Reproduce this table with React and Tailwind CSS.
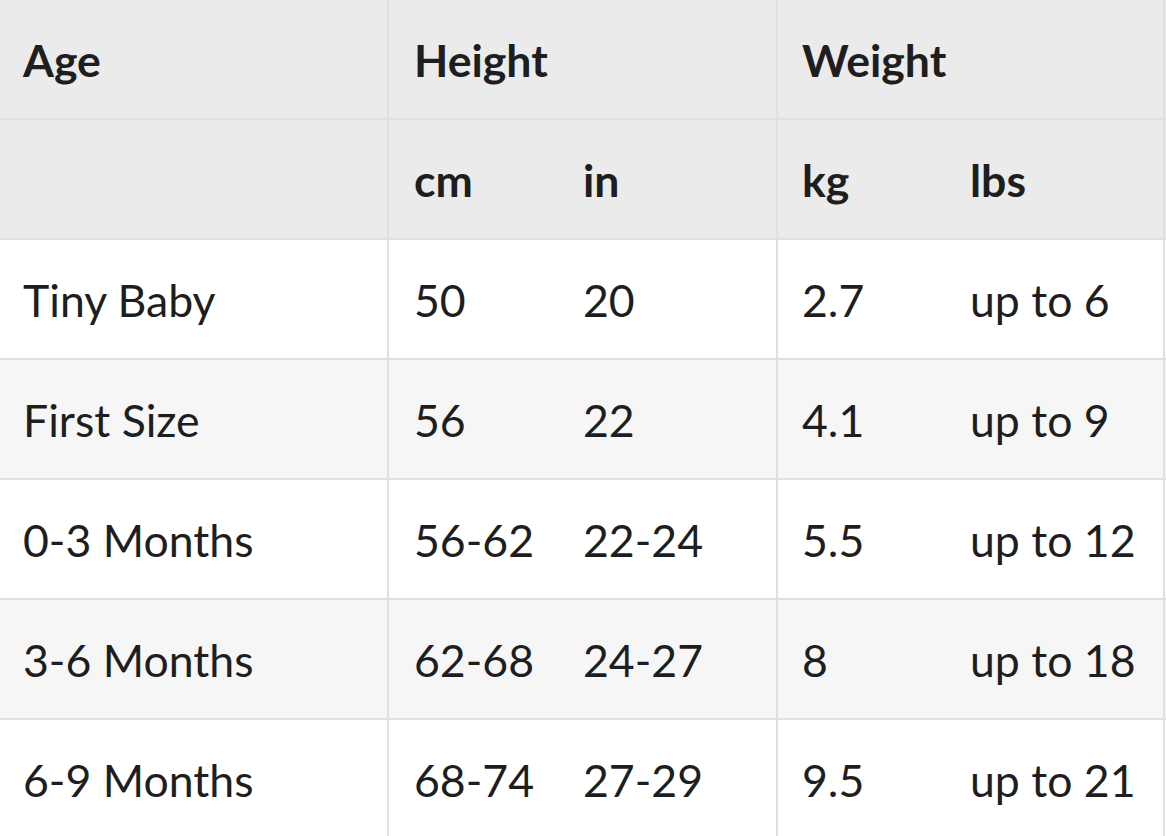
export default function App() {
  const rows = [
    ["Tiny Baby", "50", "20", "2.7", "up to 6"],
    ["First Size", "56", "22", "4.1", "up to 9"],
    ["0-3 Months", "56-62", "22-24", "5.5", "up to 12"],
    ["3-6 Months", "62-68", "24-27", "8", "up to 18"],
    ["6-9 Months", "68-74", "27-29", "9.5", "up to 21"],
  ];
  const cell = "flex items-center pl-[23px] pt-[3px]";
  const sub = "flex items-center pt-[3px]";
  return (
    <div className="w-[1166px] h-[836px] overflow-hidden bg-white text-[#1e1e1e] text-[44.6px]" style={{ fontFamily: "Lato, 'Open Sans', sans-serif" }}>
      <div className="flex h-[120px] bg-[#ebebeb] border-b-2 border-[#e0e0e0] font-bold">
        <div className={`${cell} w-[389px] border-r-2 border-[#e0e0e0]`}>Age</div>
        <div className={`${cell} w-[389px] pl-[25px] border-r-2 border-[#e0e0e0]`}>Height</div>
        <div className={`${cell} w-[387px] pl-[24px] border-r-2 border-[#e0e0e0]`}>Weight</div>
      </div>
      <div className="flex h-[120px] bg-[#ebebeb] border-b-2 border-[#e0e0e0] font-bold">
        <div className={`${cell} w-[389px] border-r-2 border-[#e0e0e0]`}></div>
        <div className="flex w-[389px] border-r-2 border-[#e0e0e0]">
          <div className={`${sub} pl-[25px] w-[194px]`}>cm</div>
          <div className={`${sub} flex-1`}>in</div>
        </div>
        <div className="flex w-[387px] border-r-2 border-[#e0e0e0]">
          <div className={`${sub} pl-[24px] w-[192px]`}>kg</div>
          <div className={`${sub} flex-1`}>lbs</div>
        </div>
      </div>
      {rows.map((r, i) => (
        <div key={i} className={`flex h-[120px] border-b-2 border-[#e0e0e0] ${i % 2 === 1 ? "bg-[#f6f6f6]" : "bg-white"}`}>
          <div className={`${cell} w-[389px] border-r-2 border-[#e0e0e0]`}>{r[0]}</div>
          <div className="flex w-[389px] border-r-2 border-[#e0e0e0]">
            <div className={`${sub} pl-[25px] w-[194px]`}>{r[1]}</div>
            <div className={`${sub} flex-1`}>{r[2]}</div>
          </div>
          <div className="flex w-[387px] border-r-2 border-[#e0e0e0]">
            <div className={`${sub} pl-[24px] w-[192px]`}>{r[3]}</div>
            <div className={`${sub} flex-1`}>{r[4]}</div>
          </div>
        </div>
      ))}
    </div>
  );
}
